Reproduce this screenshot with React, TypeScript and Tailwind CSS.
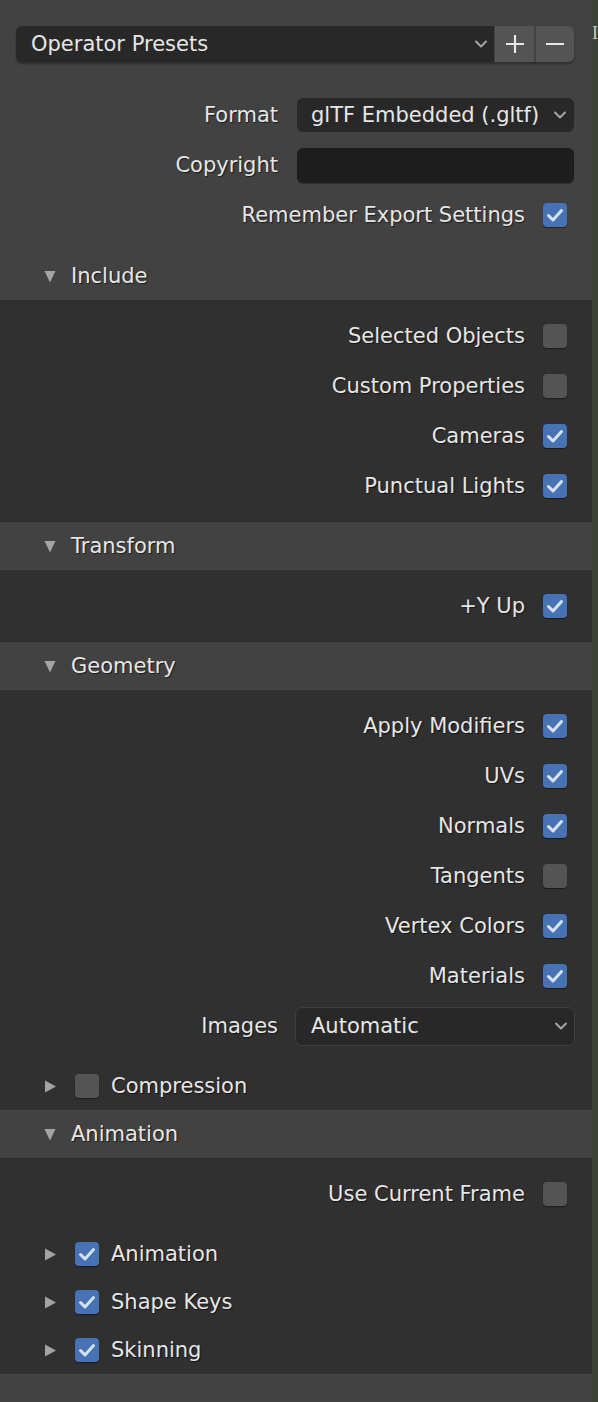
import React from "react";

const shadow = "[text-shadow:1px_1px_1px_rgba(0,0,0,0.6)]";

function Check({ on }: { on: boolean }) {
  return (
    <div
      className={`w-6 h-6 rounded-[4px] shadow-[0_1px_1px_rgba(0,0,0,0.45)] flex items-center justify-center ${
        on ? "bg-[#4772b3]" : "bg-[#545454]"
      }`}
    >
      {on && (
        <svg width="24" height="24" viewBox="0 0 24 24">
          <path d="M5.5 12.5 L10 17 L18.5 7.5" fill="none" stroke="#d7e1f2" strokeWidth="3" strokeLinecap="round" strokeLinejoin="round" />
        </svg>
      )}
    </div>
  );
}

function Chevron() {
  return (
    <svg width="14" height="10" viewBox="0 0 14 10">
      <path d="M2 2.5 L7 7.5 L12 2.5" fill="none" stroke="#a6a6a6" strokeWidth="2" strokeLinecap="round" strokeLinejoin="round" />
    </svg>
  );
}

function TriDown() {
  return (
    <svg width="12" height="13" viewBox="0 0 12 13">
      <path d="M0.5 1 L11.5 1 L6 12.5 Z" fill="#a3a3a3" />
    </svg>
  );
}

function TriRight() {
  return (
    <svg width="12" height="13" viewBox="0 0 12 13">
      <path d="M1 0.5 L12 6.5 L1 12.5 Z" fill="#a3a3a3" />
    </svg>
  );
}

function CheckRow({ label, on }: { label: string; on: boolean }) {
  return (
    <div className="h-[50px] flex items-center justify-end pr-[25px]">
      <span className={`mr-[18px] ${shadow}`}>{label}</span>
      <Check on={on} />
    </div>
  );
}

function Header({ title }: { title: string }) {
  return (
    <div className="h-[48px] bg-[#424242] flex items-center pl-[44px]">
      <TriDown />
      <span className={`ml-[15px] ${shadow}`}>{title}</span>
    </div>
  );
}

function SubHeader({ title, on }: { title: string; on: boolean }) {
  return (
    <div className="h-[48px] flex items-center pl-[44px]">
      <TriRight />
      <div className="ml-[19px]">
        <Check on={on} />
      </div>
      <span className={`ml-[12px] ${shadow}`}>{title}</span>
    </div>
  );
}

export default function App() {
  return (
    <div
      className="w-[598px] h-[1402px] flex text-[21px] text-[#e6e6e6] leading-none overflow-hidden"
      style={{ fontFamily: '"DejaVu Sans", sans-serif' }}
    >
      <div className="w-[592px] flex flex-col bg-[#303030]">
        {/* top */}
        <div className="bg-[#424242] pt-[26px] pb-[12px]">
          <div className="flex mx-4 mr-[18px] h-[36px] rounded-[6px] overflow-hidden shadow-[0_2px_2px_rgba(0,0,0,0.3)]">
            <div className="flex-1 bg-[#282828] flex items-center pl-[15px] pr-[6px]">
              <span className="flex-1">Operator Presets</span>
              <Chevron />
            </div>
            <div className="w-[39px] ml-[1px] bg-[#545454] flex items-center justify-center">
              <svg width="20" height="20" viewBox="0 0 20 20">
                <path d="M10 1 V19 M1 10 H19" stroke="#e6e6e6" strokeWidth="2.2" />
              </svg>
            </div>
            <div className="w-[38px] ml-[2px] bg-[#545454] flex items-center justify-center">
              <svg width="22" height="20" viewBox="0 0 22 20">
                <path d="M2 10 H20" stroke="#e6e6e6" strokeWidth="2.2" />
              </svg>
            </div>
          </div>
          <div className="mt-[28px] h-[50px] flex items-center">
            <span className={`w-[278px] text-right ${shadow}`}>Format</span>
            <div className="ml-[19px] w-[277px] h-[34px] rounded-[6px] bg-[#282828] flex items-center pl-[14px] pr-[7px]">
              <span className="flex-1">glTF Embedded (.gltf)</span>
              <Chevron />
            </div>
          </div>
          <div className="h-[50px] flex items-center">
            <span className={`w-[278px] text-right ${shadow}`}>Copyright</span>
            <div className="ml-[19px] w-[277px] h-[35px] rounded-[6px] bg-[#1d1d1d] shadow-[0_1px_1px_rgba(0,0,0,0.3)]" />
          </div>
          <CheckRow label="Remember Export Settings" on={true} />
        </div>

        <Header title="Include" />
        <div className="py-[11px]">
          <CheckRow label="Selected Objects" on={false} />
          <CheckRow label="Custom Properties" on={false} />
          <CheckRow label="Cameras" on={true} />
          <CheckRow label="Punctual Lights" on={true} />
        </div>

        <Header title="Transform" />
        <div className="py-[11px]">
          <CheckRow label="+Y Up" on={true} />
        </div>

        <Header title="Geometry" />
        <div className="pt-[11px]">
          <CheckRow label="Apply Modifiers" on={true} />
          <CheckRow label="UVs" on={true} />
          <CheckRow label="Normals" on={true} />
          <CheckRow label="Tangents" on={false} />
          <CheckRow label="Vertex Colors" on={true} />
          <CheckRow label="Materials" on={true} />
          <div className="h-[50px] flex items-center">
            <span className={`w-[278px] text-right ${shadow}`}>Images</span>
            <div className="ml-[17px] w-[280px] h-[39px] rounded-[7px] bg-[#282828] border border-[#3e3e3e] flex items-center pl-[15px] pr-[6px]">
              <span className="flex-1">Automatic</span>
              <Chevron />
            </div>
          </div>
          <div className="mt-[11px]">
            <SubHeader title="Compression" on={false} />
          </div>
        </div>

        <Header title="Animation" />
        <div className="pt-[11px]">
          <CheckRow label="Use Current Frame" on={false} />
          <div className="mt-[11px]">
            <SubHeader title="Animation" on={true} />
            <SubHeader title="Shape Keys" on={true} />
            <SubHeader title="Skinning" on={true} />
          </div>
        </div>
        <div className="flex-1 bg-[#424242]" />
      </div>
      <div className="flex-1 bg-[#3c4334] relative">
        <span
          className="absolute left-0 top-[24px] text-[18px] text-[#c8c8c8]"
          style={{ fontFamily: '"Liberation Serif", serif' }}
        >
          I
        </span>
      </div>
    </div>
  );
}
